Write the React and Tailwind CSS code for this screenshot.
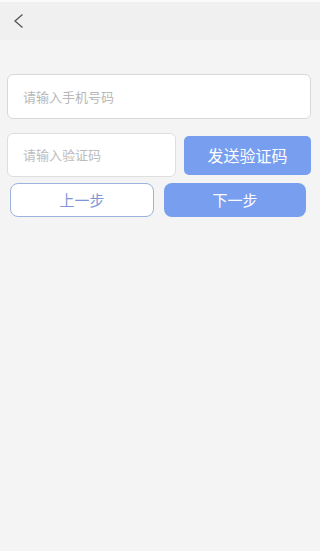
import React from 'react'

function App() {
  return (
    <div className="min-h-[551px] w-[320px] bg-[#f4f4f4] font-['Noto_Sans_CJK_SC',sans-serif]">
      <div className="h-[2px] bg-[#fafafa]" />
      <div className="flex h-[38px] items-center bg-[#f0f0f0] pl-[13px]">
        <svg width="11" height="16" viewBox="0 0 11 16" fill="none">
          <path d="M9.5 1.5 2 8 9.5 14.5" stroke="#555" strokeWidth="1.3" />
        </svg>
      </div>

      <div className="px-[7px] pt-[34px]">
        <div className="flex h-[45px] w-[304px] items-center rounded-[6px] border border-[#d8d8d8] bg-white pl-[15px] text-[13px] text-[#b8b8b8]">
          请输入手机号码
        </div>

        <div className="mt-[14px] flex items-center">
          <div className="flex h-[44px] w-[169px] items-center rounded-[6px] border border-[#dedede] bg-white pl-[15px] text-[13px] text-[#bcbcbc]">
            请输入验证码
          </div>
          <button className="ml-[8px] flex h-[39px] w-[127px] items-center justify-center rounded-[5px] bg-[#789ef0] text-[16px] text-white">
            发送验证码
          </button>
        </div>

        <div className="mt-[6px] flex px-[3px]">
          <button className="flex h-[34px] w-[144px] items-center justify-center rounded-[8px] border border-[#9db2de] bg-white text-[15px] text-[#7d97d6]">
            上一步
          </button>
          <button className="ml-[10px] flex h-[34px] w-[142px] items-center justify-center rounded-[8px] bg-[#789ef0] text-[15px] text-white">
            下一步
          </button>
        </div>
      </div>
    </div>
  )
}

export default App
